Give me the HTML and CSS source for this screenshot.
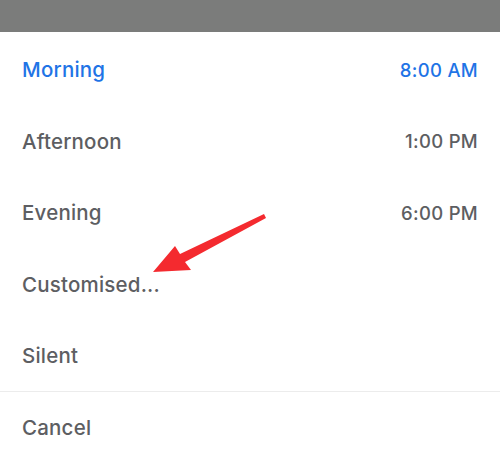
FILE: index.html
```html
<!DOCTYPE html>
<html lang="en">
<head>
<meta charset="UTF-8">
<meta name="viewport" content="width=device-width, initial-scale=1.0">
<title>Schedule</title>
<link rel="stylesheet" href="styles.css">
</head>
<body>

<div class="topbar"></div>

<div class="sheet">
    <div class="row active"><span>Morning</span><span class="time">8:00 AM</span></div>
    <div class="row"><span>Afternoon</span><span class="time">1:00 PM</span></div>
    <div class="row"><span>Evening</span><span class="time">6:00 PM</span></div>
    <div class="row"><span>Customised...</span></div>
    <div class="row"><span>Silent</span></div>
    <div class="divider"></div>
    <div class="row"><span>Cancel</span></div>
</div>

<!-- annotation arrow -->
<svg class="arrow" width="500" height="465" viewBox="0 0 500 465">
    <polygon points="153,272 175,246 180,254 264,214 266,218 185,262 191,270" fill="#f42a2f"/>
</svg>

</body>
</html>
```

FILE: styles.css
```css
body {
    margin: 0;
    background: #ffffff;
    font-family: Inter, "Noto Sans", sans-serif;
    position: relative;
    width: 500px;
    height: 465px;
    overflow: hidden;
}
.topbar {
    height: 32px;
    background: #7b7c7b;
}
.sheet {
    padding-top: 2px;
}
.row {
    height: 71.5px;
    display: flex;
    align-items: center;
    justify-content: space-between;
    padding: 0 22px;
    font-size: 20.5px;
    letter-spacing: 0.2px;
    font-weight: 500;
    color: #5d5e62;
}
.time {
    font-size: 18.5px;
    letter-spacing: 0.3px;
}
.row.active {
    color: #1f74e6;
}
.divider {
    height: 1px;
    background: #ececec;
    margin-top: -0.5px;
}
.arrow {
    position: absolute;
    left: 0;
    top: 0;
    pointer-events: none;
}
```
